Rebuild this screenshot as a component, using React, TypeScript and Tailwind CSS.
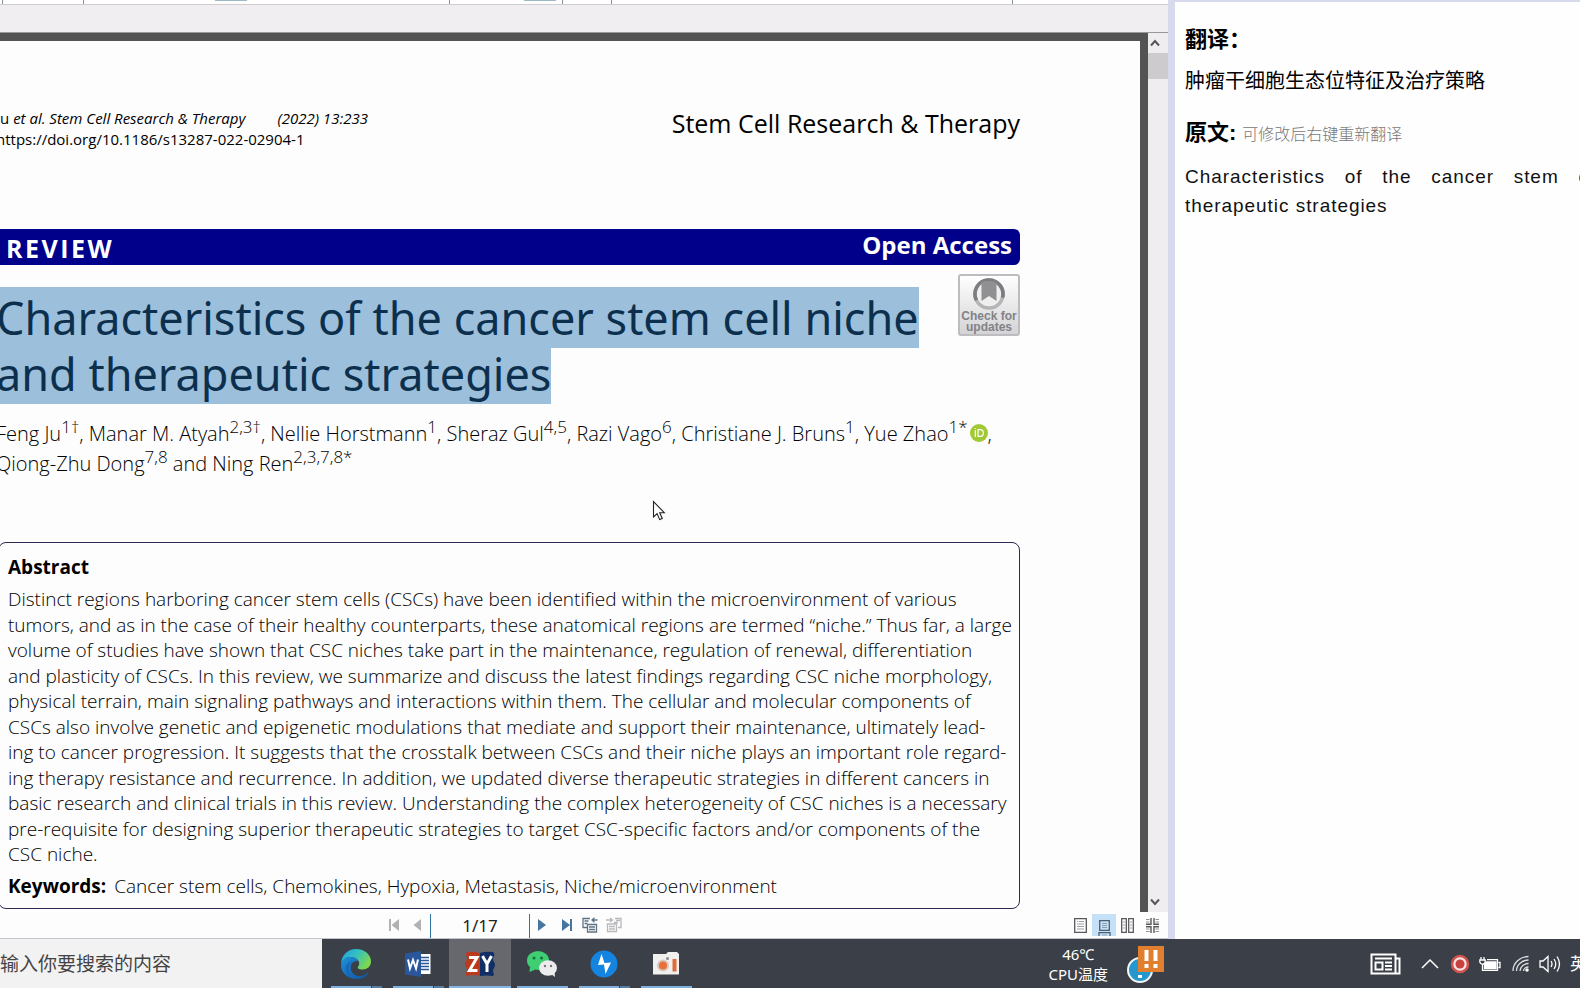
import type { ReactNode } from 'react';

const abstractLines = [
  'Distinct regions harboring cancer stem cells (CSCs) have been identified within the microenvironment of various',
  'tumors, and as in the case of their healthy counterparts, these anatomical regions are termed “niche.” Thus far, a large',
  'volume of studies have shown that CSC niches take part in the maintenance, regulation of renewal, differentiation',
  'and plasticity of CSCs. In this review, we summarize and discuss the latest findings regarding CSC niche morphology,',
  'physical terrain, main signaling pathways and interactions within them. The cellular and molecular components of',
  'CSCs also involve genetic and epigenetic modulations that mediate and support their maintenance, ultimately lead-',
  'ing to cancer progression. It suggests that the crosstalk between CSCs and their niche plays an important role regard-',
  'ing therapy resistance and recurrence. In addition, we updated diverse therapeutic strategies in different cancers in',
  'basic research and clinical trials in this review. Understanding the complex heterogeneity of CSC niches is a necessary',
  'pre-requisite for designing superior therapeutic strategies to target CSC-specific factors and/or components of the',
  'CSC niche.',
];

function Sup({ children }: { children: ReactNode }) {
  return <sup className="text-[17px]">{children}</sup>;
}

function TabStrip() {
  return (
    <div className="flex h-[5px] shrink-0 border-b border-[#cfcdd2] bg-white">
      <div className="w-[3px] border-r border-[#8d8d95]" />
      <div className="w-[81px] border-r border-[#8d8d95]" />
      <div className="flex w-[366px] border-r border-[#8d8d95] pl-[131px]">
        <div className="h-px w-8 bg-[#9db9c6]" />
      </div>
      <div className="flex w-[113px] border-r border-[#8d8d95] pl-[74px]">
        <div className="h-px w-8 bg-[#9db9c6]" />
      </div>
      <div className="w-[49px] border-r border-[#8d8d95]" />
      <div className="w-[401px] border-r border-[#8d8d95]" />
    </div>
  );
}

function CheckForUpdates() {
  return (
    <button className="flex h-[62px] w-[62px] shrink-0 flex-col items-center rounded-[3px] border-2 border-[#bdbdc1] bg-linear-to-b from-white to-[#d4d4d6] pt-px text-[12px] leading-[11px] font-bold text-[#828286]">
      <svg width="34" height="34" viewBox="0 0 34 34" className="shrink-0">
        <circle cx="17" cy="17" r="14" fill="#efeff0" stroke="#b5b5b7" strokeWidth="3.6" />
        <path d="M4.5 23.3A14 14 0 1 1 30.5 20.6" fill="none" stroke="#7d7d80" strokeWidth="3.6" />
        <path d="M9.500 5.500C13 3.500 21 3.500 24.500 6V24l-7.500-5-7.500 5z" fill="#909093" />
      </svg>
      <span className="font-['Liberation_Sans',sans-serif]">
        Check for
        <br />
        updates
      </span>
    </button>
  );
}

function Orcid() {
  return (
    <svg width="18" height="18" viewBox="0 0 18 18" className="ml-[2px] inline-block align-[-1px]">
      <circle cx="9" cy="9" r="9" fill="#a1c936" />
      <path d="M5.300 6.200V13M5.300 4v1M8 5.700h2a3.300 3.300 0 0 1 0 6.700H8z" fill="none" stroke="#fff" strokeWidth="1.200" />
    </svg>
  );
}

function Article() {
  return (
    <article className="relative min-w-0 flex-1 overflow-hidden bg-[#fdfdfe] pr-[120px] font-['Open_Sans',sans-serif] whitespace-nowrap text-black">
      <header className="-ml-1 flex h-[54px] items-start justify-between mt-[67px]">
        <div className="text-[15px] leading-[21px]">
          <p>
            Ju <i>et al. Stem Cell Research &amp; Therapy</i>
            <i className="ml-8">(2022) 13:233</i>
          </p>
          <p>
            <a href="https://doi.org/10.1186/s13287-022-02904-1">https://doi.org/10.1186/s13287-022-02904-1</a>
          </p>
        </div>
        <p className="text-[25px] leading-[30px]">Stem Cell Research &amp; Therapy</p>
      </header>
      <div className="mt-[67px] flex h-9 justify-between rounded-r-[6px] bg-[#00008b] pr-2 pl-[6px] font-bold text-white">
        <span className="pt-[3px] text-[25px] leading-[32px] tracking-widest">REVIEW</span>
        <span className="text-[24px] leading-[32px]">Open Access</span>
      </div>
      <div className="mt-[9px] flex h-[130px] justify-between">
        <h1 className="-ml-1 pt-[13px] font-['Noto_Sans',sans-serif] text-[45px] text-[#0b2f4d]">
          <span className="block h-[61px] w-fit bg-[#9cbfdb] pt-[3px] leading-[56px]">Characteristics of the cancer stem cell niche</span>
          <span className="block h-14 w-fit bg-[#9cbfdb] leading-[52px]">and therapeutic strategies</span>
        </h1>
        <CheckForUpdates />
      </div>
      <p className="mt-[15px] -ml-1 h-[60px] text-[20px] leading-[30px] font-light">
        Feng Ju<Sup>1†</Sup>, Manar M. Atyah<Sup>2,3†</Sup>, Nellie Horstmann<Sup>1</Sup>, Sheraz Gul<Sup>4,5</Sup>, Razi
        Vago<Sup>6</Sup>, Christiane J. Bruns<Sup>1</Sup>, Yue Zhao<Sup>1*</Sup>
        <Orcid />,
        <br />
        Qiong-Zhu Dong<Sup>7,8</Sup> and Ning Ren<Sup>2,3,7,8*</Sup>
      </p>
      <section className="mt-[63px] -ml-[2px] h-[367px] rounded-[8px] border border-[#2b2b55] px-[9px] pt-[11px] text-[19px]">
        <h2 className="leading-[26px] font-bold">Abstract</h2>
        <div className="mt-[7px] flex h-[279px] flex-col justify-between leading-[24px] font-light">
          {abstractLines.map((line) => (
            <p key={line}>{line}</p>
          ))}
        </div>
        <p className="mt-[7px] leading-[26px] font-light">
          <strong className="mr-2 font-bold">Keywords:</strong>
          Cancer stem cells, Chemokines, Hypoxia, Metastasis, Niche/microenvironment
        </p>
      </section>
      <svg width="14" height="22" viewBox="0 0 14 22" className="absolute top-[459px] left-[652px]">
        <path d="M1.500 1.500v15.500l3.600-3.400 2.600 6 2.600-1.100-2.600-5.800h4.600z" fill="#fff" stroke="#222" strokeWidth="1.100" />
      </svg>
    </article>
  );
}

function Scrollbar() {
  return (
    <div className="flex w-5 shrink-0 flex-col bg-[#efedf0]">
      <button aria-label="Scroll up" className="flex h-5 items-center justify-center pr-[6px]">
        <svg width="10" height="8" viewBox="0 0 10 8">
          <path d="M1 6.500l4-4.500 4 4.500" fill="none" stroke="#55555a" strokeWidth="2" />
        </svg>
      </button>
      <div className="h-[26px] bg-[#cdcbce]" />
      <button aria-label="Scroll down" className="mt-auto flex h-5 items-center justify-center pr-[6px]">
        <svg width="10" height="8" viewBox="0 0 10 8">
          <path d="M1 1.500l4 4.500 4-4.500" fill="none" stroke="#55555a" strokeWidth="2" />
        </svg>
      </button>
    </div>
  );
}

function HistoryIcon({ flip, color }: { flip?: boolean; color: string }) {
  return (
    <svg width="16" height="16" viewBox="0 0 16 16" fill="none" stroke={color} strokeWidth="1.300">
      {flip ? (
        <path d="M9 1.500h6v9h-3M8 5.500h4M10 3.500h4M1.500 7h9v7.500h-9zM3 9.500h6M3 12h6M0 3h6M4 1l2.500 2L4 5" />
      ) : (
        <path d="M8 1.500H1v9h4M2.500 4h4M2.500 6.500h3M5.500 7.500h9V15h-9zM7 10h6M7 12.500h6M15.500 3h-5M12.500.800L10 3l2.500 2.200" />
      )}
    </svg>
  );
}

function PageBar() {
  return (
    <div className="flex h-[27px] shrink-0 items-center justify-between border-b border-[#c4c4cc] bg-[#fdfdfe] pr-[9px] pl-[388px]">
      <div className="flex items-center">
        <button aria-label="First page" className="w-6">
          <svg width="12" height="14" viewBox="0 0 12 14" fill="#b2b2b4">
            <path d="M1 1h2v12H1zM11 1v12L3.500 7z" />
          </svg>
        </button>
        <button aria-label="Previous page" className="w-[18px]">
          <svg width="12" height="14" viewBox="0 0 12 14" fill="#b2b2b4">
            <path d="M9 1v12L1.500 7z" />
          </svg>
        </button>
        <input
          aria-label="Page"
          defaultValue="1/17"
          className="mt-px h-6 w-[100px] border-x border-[#2f74a3] text-center font-['Noto_Sans',sans-serif] text-[17px] text-[#222]"
        />
        <button aria-label="Next page" className="ml-[7px] w-6">
          <svg width="12" height="14" viewBox="0 0 12 14" fill="#46759e">
            <path d="M1 1v12l8-6z" />
          </svg>
        </button>
        <button aria-label="Last page" className="w-[21px]">
          <svg width="12" height="14" viewBox="0 0 12 14" fill="#46759e">
            <path d="M9 1h2v12H9zM1 1v12l8-6z" />
          </svg>
        </button>
        <button aria-label="Back" className="w-6">
          <HistoryIcon color="#5d7384" />
        </button>
        <button aria-label="Forward">
          <HistoryIcon flip color="#b9b9bb" />
        </button>
      </div>
      <div className="flex items-center">
        <button aria-label="Single page" className="w-[18px]">
          <svg width="13" height="15" viewBox="0 0 13 15" fill="none">
            <path d="M.700.700h11.600v13.600H.700z" stroke="#58585d" strokeWidth="1.300" />
            <path d="M3 3.500h1M5 3.500h5M3 6h7M3 8.500h7M3 11h7" stroke="#a0a0a4" />
          </svg>
        </button>
        <button aria-label="Continuous" className="flex h-[22px] w-6 items-end justify-center bg-[#c5e1f8]">
          <svg width="13" height="16" viewBox="0 0 13 16" fill="none">
            <path d="M1.700.700h9.600v9.600H1.700zM1 16v-3.300h11V16" stroke="#4d5f70" strokeWidth="1.300" />
            <path d="M4 3.500h5M4 5.500h5M4 7.500h5M4 15h5" stroke="#8ba0b2" />
          </svg>
        </button>
        <button aria-label="Two pages" className="ml-[5px] w-[25px]">
          <svg width="13" height="15" viewBox="0 0 13 15" fill="none">
            <path d="M.700.700h4.600v13.600H.700zM7.700.700h4.600v13.600H7.700z" stroke="#58585d" strokeWidth="1.300" />
            <path d="M2 4h2M2 7h2M2 10h2M9 4h2M9 7h2M9 10h2" stroke="#a0a0a4" />
          </svg>
        </button>
        <button aria-label="Two pages continuous">
          <svg width="13" height="15" viewBox="0 0 13 15" fill="none">
            <path d="M5 0v6.300H0M8 0v6.300h5M5 15V8.700H0M8 15V8.700h5" stroke="#58585d" strokeWidth="1.400" />
            <path d="M0 1.500h3.500M0 4h3.500M9.500 1.500H13M9.500 4H13M0 11h3.500M0 13.500h3.500M9.500 11H13M9.500 13.500H13" stroke="#909094" />
          </svg>
        </button>
      </div>
    </div>
  );
}

function TranslationPanel() {
  return (
    <aside className="w-[412px] shrink-0 overflow-hidden border-t-2 border-l-[7px] border-[#d7d9ec] bg-[#fefefe] pl-[10px] font-['Liberation_Sans','Noto_Sans_CJK_SC',sans-serif] text-black">
      <h2 className="mt-[22px] text-[22px] leading-8 font-bold">翻译：</h2>
      <p className="mt-[9px] text-[20px] leading-8">肿瘤干细胞生态位特征及治疗策略</p>
      <div className="mt-5 flex items-center">
        <h2 className="text-[22px] leading-8 font-bold">原文:</h2>
        <span className="ml-[6px] pt-1 text-[16px] leading-7 font-light text-[#777]">可修改后右键重新翻译</span>
      </div>
      <p className="mt-[13px] w-[550px] text-justify text-[19px] leading-[29px] tracking-wider text-[#111]">
        Characteristics of the cancer stem cell niche and therapeutic strategies
      </p>
    </aside>
  );
}

function EdgeIcon() {
  return (
    <svg width="32" height="32" viewBox="0 0 32 32">
      <defs>
        <linearGradient id="edgeTop" x1="0" y1="0" x2="1" y2="0.500">
          <stop offset="0" stopColor="#1f9fe0" />
          <stop offset="0.500" stopColor="#33bfc5" />
          <stop offset="1" stopColor="#7bd84f" />
        </linearGradient>
        <linearGradient id="edgeLow" x1="0" y1="0" x2="1" y2="1">
          <stop offset="0" stopColor="#1c93dd" />
          <stop offset="1" stopColor="#134f9c" />
        </linearGradient>
      </defs>
      <path d="M1 17C1 7 8 1 16 1c9 0 15 6 15 12.500 0 5-4 8-8.500 8-3.500 0-5.500-1.200-4.500-2.800 1-1.500 1.200-2.200 1.200-3.200C19.200 12 15.500 9 11 9 5.500 9 2 12 1 17z" fill="url(#edgeTop)" />
      <path d="M1 17c1-5 4.500-8 9.500-8 3.500 0 6.500 1.600 8 4-5-.8-7.800 2.500-7.800 6.500 0 6 5.500 9.500 11 8.300 3-.7 5-2.300 6-3.300.8-.5 1 .2.500 1-2.700 4-7 5.800-12.200 5.500C7.500 30.500 1 25 1 17z" fill="url(#edgeLow)" />
      <path d="M13 13.500c-2.500 1.200-4 3.300-4 6.500 0 4 2.500 8.500 8 10.500C10 31 5 25.500 5.500 20c.5-4 3.500-6.500 7.500-6.500z" fill="#1769b8" />
    </svg>
  );
}

function WordIcon() {
  return (
    <svg width="28" height="28" viewBox="0 0 28 28">
      <path d="M14 4h12.500v20H14z" fill="#fff" />
      <path d="M17 7.500h8M17 10.500h8M17 13.500h8M17 16.500h8M17 19.500h8" stroke="#2a579a" strokeWidth="1.500" />
      <path d="M1 3.500L17 1v26L1 24.500z" fill="#2a569c" />
      <path d="M4 9.500l2 9 3-8.500 3 8.500 2-9" fill="none" stroke="#fff" strokeWidth="2" />
    </svg>
  );
}

function ZyIcon() {
  return (
    <svg width="30" height="26" viewBox="0 0 30 26">
      <path d="M2 1q7-1 13 1v23q-6-2-13 0-2-1-1-3 2-3 0-6t0-6q2-3 0-6 0-2 1-3z" fill="#bb3a1e" />
      <path d="M15 2q6-2 13-1 2 2 1 4-2 3 0 6t0 6q-2 3 0 6 0 1-1 2-7-1-13 0z" fill="#102f66" />
      <path d="M4 6.500h8L4.500 19.500H12.500" fill="none" stroke="#fff" strokeWidth="3" />
      <path d="M17.500 5l4.500 8 4.500-8M22 12.500V21" fill="none" stroke="#fff" strokeWidth="3" />
    </svg>
  );
}

function WechatIcon() {
  return (
    <svg width="32" height="28" viewBox="0 0 32 28">
      <ellipse cx="12" cy="10.500" rx="11" ry="9.500" fill="#3fce72" />
      <path d="M4 17l-.500 5 6-2.500z" fill="#3fce72" />
      <circle cx="8" cy="8" r="1.500" fill="#14713a" />
      <circle cx="15.500" cy="8" r="1.500" fill="#14713a" />
      <ellipse cx="22" cy="18" rx="9" ry="7.700" fill="#ececee" />
      <path d="M25 24l4 3-.500-5z" fill="#ececee" />
      <circle cx="19" cy="16" r="1.200" fill="#77777b" />
      <circle cx="25" cy="16" r="1.200" fill="#77777b" />
    </svg>
  );
}

function BoltIcon() {
  return (
    <svg width="28" height="28" viewBox="0 0 28 28">
      <circle cx="14" cy="14" r="13.500" fill="#1583e0" />
      <path d="M11.500 4L8 15l6-.5 1.500 9.500L21 12.500l-6.500.5z" fill="#fff" />
    </svg>
  );
}

function RecorderIcon() {
  return (
    <svg width="28" height="26" viewBox="0 0 28 26">
      <path d="M1 3h13l2-2h9l2 2v20.500H1z" fill="#f2f0ee" />
      <circle cx="11" cy="14.500" r="5" fill="#e8703a" stroke="#d9c8be" strokeWidth="2" />
      <circle cx="15.500" cy="7.500" r="1.500" fill="#8a8a8c" />
      <path d="M20.500 8h4v12.500h-4z" fill="#dd6b3b" />
    </svg>
  );
}

const apps = [
  { name: 'Edge', icon: <EdgeIcon />, stacked: true, active: false },
  { name: 'Word', icon: <WordIcon />, stacked: true, active: false },
  { name: 'ZY', icon: <ZyIcon />, stacked: false, active: true },
  { name: 'WeChat', icon: <WechatIcon />, stacked: false, active: false },
  { name: 'Thunder', icon: <BoltIcon />, stacked: true, active: false },
  { name: 'Recorder', icon: <RecorderIcon />, stacked: false, active: false },
];

function Taskbar() {
  return (
    <footer className="flex h-[49px] shrink-0 overflow-hidden bg-[#3b3f47] font-['Noto_Sans','Noto_Sans_CJK_SC',sans-serif] text-white">
      <input
        aria-label="输入你要搜索的内容"
        placeholder="输入你要搜索的内容"
        className="w-[322px] shrink-0 bg-[#f2f2f3] pt-[2px] text-[19px] placeholder:text-[#444]"
      />
      <nav className="flex pl-[3px]">
        {apps.map((app) => (
          <button
            key={app.name}
            aria-label={app.name}
            className={app.active ? 'flex w-[62px] flex-col items-center bg-[#66686e]' : 'flex w-[62px] flex-col items-center'}
          >
            <span className="flex flex-1 items-center pt-[2px]">{app.icon}</span>
            <span className={app.active ? 'flex h-[2px] w-full bg-[#83b4e2]' : 'flex h-[2px] w-[51px] justify-end bg-[#7fb0dd]'}>
              {app.stacked && <span className="w-[11px] border-l border-[#3b3f47] bg-[#587ea1]" />}
            </span>
          </button>
        ))}
      </nav>
      <div className="ml-auto flex items-center">
        <p className="text-center text-[15px] leading-[20px]">
          46℃
          <br />
          CPU温度
        </p>
        <button aria-label="CPU monitor" className="ml-[19px]">
          <svg width="40" height="40" viewBox="0 0 40 40">
            <circle cx="13" cy="26" r="12" fill="#2497cf" stroke="#f2f6f8" strokeWidth="2" />
            <path d="M13 19v9M13 31v3" stroke="#fff" strokeWidth="4" />
            <path d="M11 2h26v26H11z" fill="#e07f2e" />
            <path d="M19.500 6v11M28.500 6v11M19.500 20v4M28.500 20v4" stroke="#fff" strokeWidth="4" />
          </svg>
        </button>
        <button aria-label="News" className="ml-[203px]">
          <svg width="32" height="22" viewBox="0 0 32 22" fill="none" stroke="#fff" strokeWidth="2">
            <path d="M1.500 1.500h24v19h-24zM25.500 5.500h4v15h-4M5 5.500h17M5.500 9.500h7v7h-7zM15 9.500h7M15 13h7M15 16.500h7" />
          </svg>
        </button>
        <button aria-label="Show hidden icons" className="ml-[19px]">
          <svg width="18" height="11" viewBox="0 0 18 11" fill="none" stroke="#fff" strokeWidth="1.500">
            <path d="M1 10l8-8 8 8" />
          </svg>
        </button>
        <button aria-label="Record" className="ml-[11px]">
          <svg width="20" height="20" viewBox="0 0 20 20">
            <circle cx="10" cy="10" r="8" fill="#f6e4e3" stroke="#d2524f" strokeWidth="2.500" />
            <circle cx="10" cy="10" r="4.500" fill="#c8423f" />
          </svg>
        </button>
        <button aria-label="Battery" className="ml-[9px]">
          <svg width="22" height="16" viewBox="0 0 22 16" fill="none" stroke="#fff" strokeWidth="1.300">
            <path d="M2 1v3M5 1v3M.800 4h5.400v1.500a2.700 2.700 0 0 1-5.400 0zM3.500 8v6.300h15V3.700H8M19.500 6.500h1.500v5h-1.500" />
            <path d="M7 6h10v6.500H5.500V9z" fill="#fff" />
          </svg>
        </button>
        <button aria-label="Network" className="ml-[11px]">
          <svg width="18" height="18" viewBox="0 0 18 18" fill="none" stroke="#dcdde0" strokeWidth="1.300">
            <path d="M1 16C1 8 8 1.500 16.500 1.500M4.500 16C4.500 10 10 5 16.500 5M8 16c0-4 4-7.500 8.500-7.500M11.500 16c0-2 2-4 5-4" />
            <circle cx="15" cy="15" r="1.800" fill="#fff" stroke="none" />
          </svg>
        </button>
        <button aria-label="Volume" className="ml-[9px]">
          <svg width="22" height="18" viewBox="0 0 22 18" fill="none" stroke="#fff" strokeWidth="1.300">
            <path d="M1 6h3l5-4.500v15L4 12H1zM12 6q2 3 0 6M15 4q3.500 5 0 10M18 1.500q5 7.500 0 15" />
          </svg>
        </button>
        <button aria-label="Input language" className="-mr-[7px] ml-[9px] text-[17px] leading-6">英</button>
      </div>
    </footer>
  );
}

export default function App() {
  return (
    <div className="flex h-screen flex-col overflow-hidden bg-white">
      <div className="flex min-h-0 flex-1">
        <main className="flex min-w-0 flex-1 flex-col">
          <TabStrip />
          <div className="h-7 shrink-0 border-b border-[#98979b] bg-[#f0eef1]" />
          <div className="flex min-h-0 flex-1">
            <div className="flex min-w-0 flex-1 border-t-8 border-r-8 border-[#535353]">
              <Article />
            </div>
            <Scrollbar />
          </div>
          <PageBar />
        </main>
        <TranslationPanel />
      </div>
      <Taskbar />
    </div>
  );
}
